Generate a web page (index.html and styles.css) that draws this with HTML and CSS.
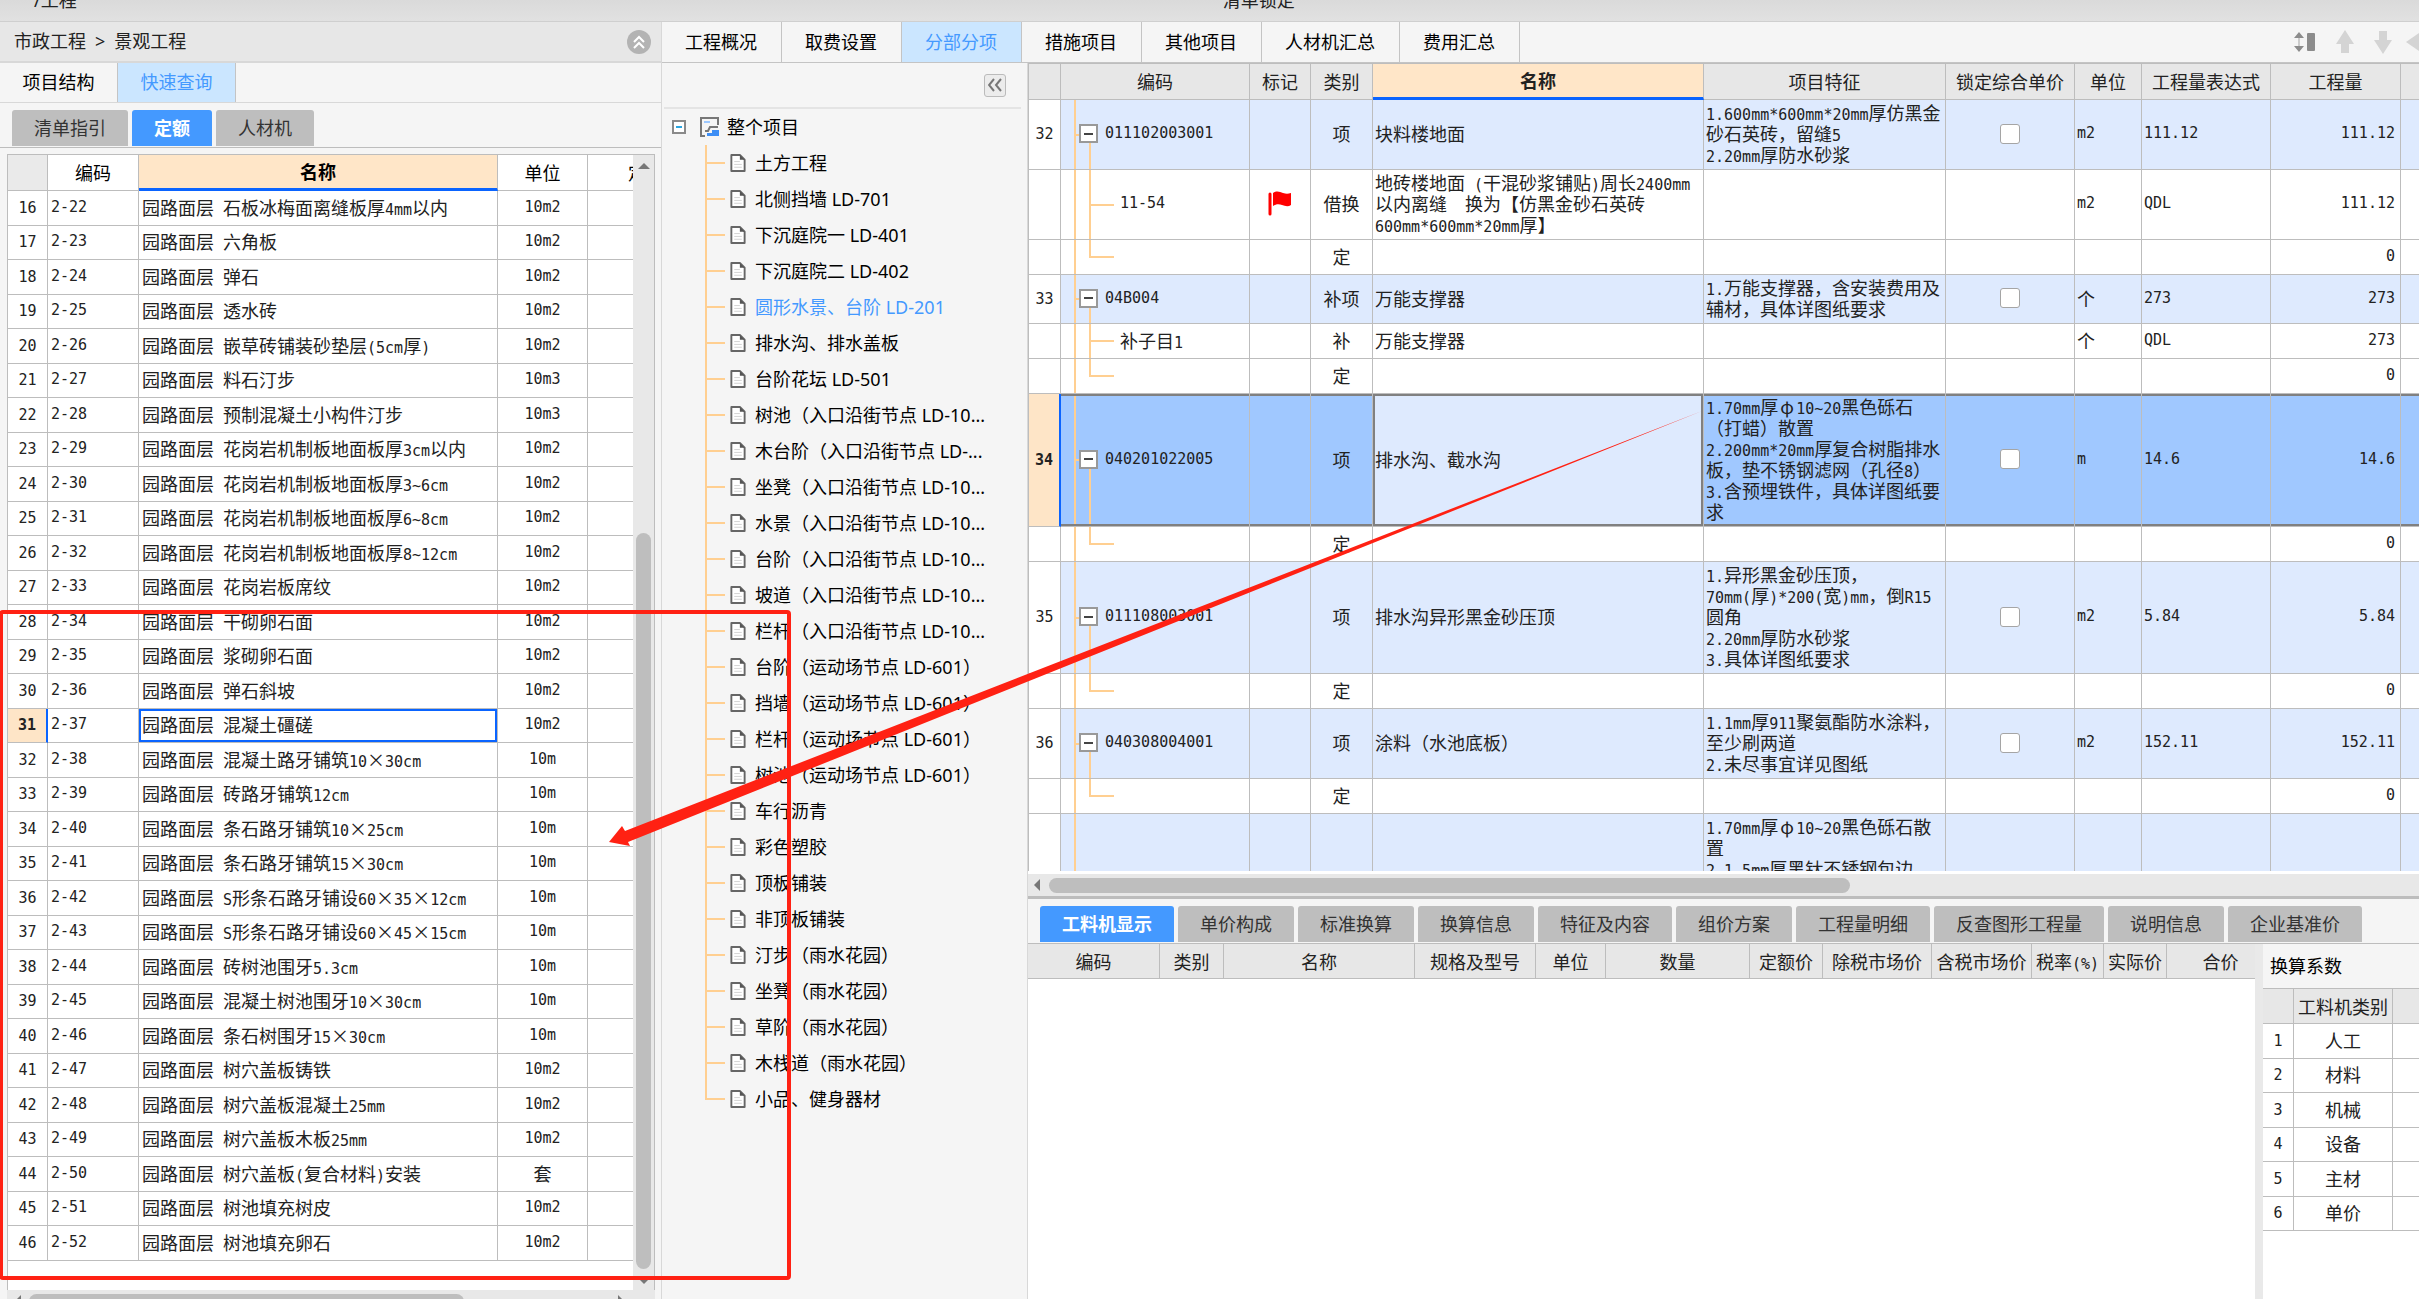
FILE: index.html
```html
<!DOCTYPE html>
<html lang="zh-CN">
<head>
<meta charset="utf-8">
<title>景观工程</title>
<link rel="stylesheet" href="styles.css">
</head>
<body>
<header class="topbar"><span class="top-project">/工程</span><span class="top-lock">清单锁定</span></header>
<div class="app">
  <aside class="left">
    <div class="crumbs">
      <span>市政工程&ensp;&gt;&ensp;景观工程</span>
      <button class="round" aria-label="收起"><svg width="24" height="24" viewBox="0 0 24 24"><circle cx="12" cy="12" r="12" fill="#b3b3b3"/><path d="M7 12l5-5 5 5M7 18l5-5 5 5" fill="none" stroke="#fff" stroke-width="2"/></svg></button>
    </div>
    <nav class="side-tabs"><button>项目结构</button><button class="on">快速查询</button></nav>
    <nav class="pills"><button>清单指引</button><button class="on">定额</button><button>人材机</button></nav>
    <div class="lookup">
      <div class="lookup-main">
        <div class="lookup-view">
          <table class="grid lib">
            <colgroup><col class="w40"><col class="w91"><col class="w359"><col class="w90"><col class="w134"></colgroup>
            <thead><tr><th class="corner"></th><th>编码</th><th class="sorted">名称</th><th>单位</th><th class="cut">定</th></tr></thead>
            <tbody>
            <tr><th>16</th><td class="n">2-22</td><td>园路面层&ensp;石板冰梅面离缝板厚<span class="n">4mm</span>以内</td><td class="n">10m2</td><td></td></tr>
            <tr><th>17</th><td class="n">2-23</td><td>园路面层&ensp;六角板</td><td class="n">10m2</td><td></td></tr>
            <tr><th>18</th><td class="n">2-24</td><td>园路面层&ensp;弹石</td><td class="n">10m2</td><td></td></tr>
            <tr><th>19</th><td class="n">2-25</td><td>园路面层&ensp;透水砖</td><td class="n">10m2</td><td></td></tr>
            <tr><th>20</th><td class="n">2-26</td><td>园路面层&ensp;嵌草砖铺装砂垫层<span class="n">(5cm</span>厚<span class="n">)</span></td><td class="n">10m2</td><td></td></tr>
            <tr><th>21</th><td class="n">2-27</td><td>园路面层&ensp;料石汀步</td><td class="n">10m3</td><td></td></tr>
            <tr><th>22</th><td class="n">2-28</td><td>园路面层&ensp;预制混凝土小构件汀步</td><td class="n">10m3</td><td></td></tr>
            <tr><th>23</th><td class="n">2-29</td><td>园路面层&ensp;花岗岩机制板地面板厚<span class="n">3cm</span>以内</td><td class="n">10m2</td><td></td></tr>
            <tr><th>24</th><td class="n">2-30</td><td>园路面层&ensp;花岗岩机制板地面板厚<span class="n">3~6cm</span></td><td class="n">10m2</td><td></td></tr>
            <tr><th>25</th><td class="n">2-31</td><td>园路面层&ensp;花岗岩机制板地面板厚<span class="n">6~8cm</span></td><td class="n">10m2</td><td></td></tr>
            <tr><th>26</th><td class="n">2-32</td><td>园路面层&ensp;花岗岩机制板地面板厚<span class="n">8~12cm</span></td><td class="n">10m2</td><td></td></tr>
            <tr><th>27</th><td class="n">2-33</td><td>园路面层&ensp;花岗岩板席纹</td><td class="n">10m2</td><td></td></tr>
            <tr><th>28</th><td class="n">2-34</td><td>园路面层&ensp;干砌卵石面</td><td class="n">10m2</td><td></td></tr>
            <tr><th>29</th><td class="n">2-35</td><td>园路面层&ensp;浆砌卵石面</td><td class="n">10m2</td><td></td></tr>
            <tr><th>30</th><td class="n">2-36</td><td>园路面层&ensp;弹石斜坡</td><td class="n">10m2</td><td></td></tr>
            <tr class="current"><th>31</th><td class="n">2-37</td><td>园路面层&ensp;混凝土礓磋</td><td class="n">10m2</td><td></td></tr>
            <tr><th>32</th><td class="n">2-38</td><td>园路面层&ensp;混凝土路牙铺筑<span class="n">10</span><span class="x">×</span><span class="n">30cm</span></td><td class="n">10m</td><td></td></tr>
            <tr><th>33</th><td class="n">2-39</td><td>园路面层&ensp;砖路牙铺筑<span class="n">12cm</span></td><td class="n">10m</td><td></td></tr>
            <tr><th>34</th><td class="n">2-40</td><td>园路面层&ensp;条石路牙铺筑<span class="n">10</span><span class="x">×</span><span class="n">25cm</span></td><td class="n">10m</td><td></td></tr>
            <tr><th>35</th><td class="n">2-41</td><td>园路面层&ensp;条石路牙铺筑<span class="n">15</span><span class="x">×</span><span class="n">30cm</span></td><td class="n">10m</td><td></td></tr>
            <tr><th>36</th><td class="n">2-42</td><td>园路面层&ensp;<span class="n">S</span>形条石路牙铺设<span class="n">60</span><span class="x">×</span><span class="n">35</span><span class="x">×</span><span class="n">12cm</span></td><td class="n">10m</td><td></td></tr>
            <tr><th>37</th><td class="n">2-43</td><td>园路面层&ensp;<span class="n">S</span>形条石路牙铺设<span class="n">60</span><span class="x">×</span><span class="n">45</span><span class="x">×</span><span class="n">15cm</span></td><td class="n">10m</td><td></td></tr>
            <tr><th>38</th><td class="n">2-44</td><td>园路面层&ensp;砖树池围牙<span class="n">5.3cm</span></td><td class="n">10m</td><td></td></tr>
            <tr><th>39</th><td class="n">2-45</td><td>园路面层&ensp;混凝土树池围牙<span class="n">10</span><span class="x">×</span><span class="n">30cm</span></td><td class="n">10m</td><td></td></tr>
            <tr><th>40</th><td class="n">2-46</td><td>园路面层&ensp;条石树围牙<span class="n">15</span><span class="x">×</span><span class="n">30cm</span></td><td class="n">10m</td><td></td></tr>
            <tr><th>41</th><td class="n">2-47</td><td>园路面层&ensp;树穴盖板铸铁</td><td class="n">10m2</td><td></td></tr>
            <tr><th>42</th><td class="n">2-48</td><td>园路面层&ensp;树穴盖板混凝土<span class="n">25mm</span></td><td class="n">10m2</td><td></td></tr>
            <tr><th>43</th><td class="n">2-49</td><td>园路面层&ensp;树穴盖板木板<span class="n">25mm</span></td><td class="n">10m2</td><td></td></tr>
            <tr><th>44</th><td class="n">2-50</td><td>园路面层&ensp;树穴盖板<span class="n">(</span>复合材料<span class="n">)</span>安装</td><td>套</td><td></td></tr>
            <tr><th>45</th><td class="n">2-51</td><td>园路面层&ensp;树池填充树皮</td><td class="n">10m2</td><td></td></tr>
            <tr><th>46</th><td class="n">2-52</td><td>园路面层&ensp;树池填充卵石</td><td class="n">10m2</td><td></td></tr>
            </tbody>
          </table>
        </div>
        <div class="vscroll"><i class="arrow up"></i><i></i><i class="thumb"></i><i class="arrow down"></i></div>
      </div>
      <div class="hscroll lib-scroll"><i class="arrow prev"></i><i class="thumb"></i><i></i><i class="arrow next"></i><i></i></div>
    </div>
  </aside>

  <main class="work">
    <div class="modules">
      <nav class="module-tabs"><button>工程概况</button><button>取费设置</button><button class="on">分部分项</button><button>措施项目</button><button>其他项目</button><button>人材机汇总</button><button>费用汇总</button></nav>
      <div class="tools">
        <button aria-label="行高"><svg width="22" height="20" viewBox="0 0 22 20"><path d="M5 0l5 6H0zM5 20l5-6H0z" fill="#8c8c8c"/><path d="M5 6v8" stroke="#ccc" stroke-width="2"/><rect x="13" y="1" width="8" height="18" rx="1" fill="#8c8c8c"/></svg></button>
        <button aria-label="上移"><svg width="18" height="24" viewBox="0 0 18 24"><path d="M9 0l9 14h-5v9H5v-9H0z" fill="#d4d4d4"/></svg></button>
        <button aria-label="下移"><svg width="18" height="24" viewBox="0 0 18 24"><path d="M9 24l9-14h-5V1H5v9H0z" fill="#d4d4d4"/></svg></button>
        <button aria-label="左移"><svg width="13" height="20" viewBox="0 0 13 20"><path d="M0 10L13 1v18z" fill="#d4d4d4"/></svg></button>
      </div>
    </div>
    <div class="workbody">
      <section class="outline">
        <div class="outline-head"><button aria-label="折叠"><svg width="14" height="14" viewBox="0 0 14 14"><path d="M6 1L1 7l5 6M13 1L8 7l5 6" fill="none" stroke="#777" stroke-width="2"/></svg></button></div>
        <div class="root">
          <svg width="14" height="14" viewBox="0 0 14 14"><rect x="1" y="1" width="12" height="12" fill="#fff" stroke="#8a8a8a" stroke-width="2"/><path d="M4 7h6" stroke="#2aa5e0" stroke-width="2"/></svg>
          <svg width="20" height="20" viewBox="0 0 20 20"><path d="M18 8V1H1v18h4" fill="none" stroke="#777" stroke-width="2"/><path d="M4 5h6" stroke="#9cc8ff" stroke-width="2"/><path d="M5 14h3l2-4h8" fill="none" stroke="#777" stroke-width="2"/><path d="M7 19v-3h5v-3h7v6z" fill="#3d8ef5"/></svg>
          <span>整个项目</span>
        </div>
        <svg class="defs" width="0" height="0"><symbol id="doc" viewBox="0 0 16 19"><path d="M1 1h9l5 5v12H1z" fill="#fff" stroke="#666" stroke-width="2" stroke-linejoin="round"/><path d="M10 1l5 5h-5z" fill="#555"/><path d="M4 8h6M4 11h8M4 14h8" stroke="#d0d0d0"/></symbol></svg>
        <ul class="tree">
          <li><svg><use href="#doc"/></svg><a href="#">土方工程</a></li>
          <li><svg><use href="#doc"/></svg><a href="#">北侧挡墙 LD-701</a></li>
          <li><svg><use href="#doc"/></svg><a href="#">下沉庭院一 LD-401</a></li>
          <li><svg><use href="#doc"/></svg><a href="#">下沉庭院二 LD-402</a></li>
          <li class="on"><svg><use href="#doc"/></svg><a href="#">圆形水景、台阶 LD-201</a></li>
          <li><svg><use href="#doc"/></svg><a href="#">排水沟、排水盖板</a></li>
          <li><svg><use href="#doc"/></svg><a href="#">台阶花坛 LD-501</a></li>
          <li><svg><use href="#doc"/></svg><a href="#">树池（入口沿街节点 LD-10...</a></li>
          <li><svg><use href="#doc"/></svg><a href="#">木台阶（入口沿街节点 LD-...</a></li>
          <li><svg><use href="#doc"/></svg><a href="#">坐凳（入口沿街节点 LD-10...</a></li>
          <li><svg><use href="#doc"/></svg><a href="#">水景（入口沿街节点 LD-10...</a></li>
          <li><svg><use href="#doc"/></svg><a href="#">台阶（入口沿街节点 LD-10...</a></li>
          <li><svg><use href="#doc"/></svg><a href="#">坡道（入口沿街节点 LD-10...</a></li>
          <li><svg><use href="#doc"/></svg><a href="#">栏杆（入口沿街节点 LD-10...</a></li>
          <li><svg><use href="#doc"/></svg><a href="#">台阶（运动场节点 LD-601）</a></li>
          <li><svg><use href="#doc"/></svg><a href="#">挡墙（运动场节点 LD-601）</a></li>
          <li><svg><use href="#doc"/></svg><a href="#">栏杆（运动场节点 LD-601）</a></li>
          <li><svg><use href="#doc"/></svg><a href="#">树池（运动场节点 LD-601）</a></li>
          <li><svg><use href="#doc"/></svg><a href="#">车行沥青</a></li>
          <li><svg><use href="#doc"/></svg><a href="#">彩色塑胶</a></li>
          <li><svg><use href="#doc"/></svg><a href="#">顶板铺装</a></li>
          <li><svg><use href="#doc"/></svg><a href="#">非顶板铺装</a></li>
          <li><svg><use href="#doc"/></svg><a href="#">汀步（雨水花园）</a></li>
          <li><svg><use href="#doc"/></svg><a href="#">坐凳（雨水花园）</a></li>
          <li><svg><use href="#doc"/></svg><a href="#">草阶（雨水花园）</a></li>
          <li><svg><use href="#doc"/></svg><a href="#">木栈道（雨水花园）</a></li>
          <li><svg><use href="#doc"/></svg><a href="#">小品、健身器材</a></li>
        </ul>
      </section>

      <div class="content">
        <section class="bill">
          <div class="bill-view">
            <table class="grid items">
              <colgroup><col class="w32"><col class="w189"><col class="w61"><col class="w62"><col class="w331"><col class="w242"><col class="w129"><col class="w67"><col class="w129"><col class="w130"><col class="w90"></colgroup>
              <thead><tr><th></th><th>编码</th><th>标记</th><th>类别</th><th class="sorted">名称</th><th>项目特征</th><th>锁定综合单价</th><th>单位</th><th>工程量表达式</th><th>工程量</th><th></th></tr></thead>
              <tbody>
              <tr class="item"><th>32</th><td class="code"><span><i class="box"></i>011102003001</span></td><td></td><td>项</td><td>块料楼地面</td><td><span class="n">1.600mm*600mm*20mm</span>厚仿黑金<br>砂石英砖，留缝<span class="n">5</span><br><span class="n">2.20mm</span>厚防水砂浆</td><td><input type="checkbox" aria-label="锁定 32"></td><td class="n">m2</td><td class="n">111.12</td><td class="n">111.12</td><td></td></tr>
              <tr><th></th><td class="code kid n">11-54</td><td><svg class="flag" width="24" height="25" viewBox="0 0 24 25"><path d="M2 3v20" stroke="#f00" stroke-width="3" stroke-linecap="round"/><path d="M5 2c4-3 7-1 10 0s5 1 8 0v12c-3 2-6 1-9 0s-6-1-9 1z" fill="#f00"/></svg></td><td>借换</td><td>地砖楼地面<span class="n"> (</span>干混砂浆铺贴<span class="n">)</span>周长<span class="n">2400mm</span><br>以内离缝　换为【仿黑金砂石英砖<br><span class="n">600mm*600mm*20mm</span>厚】</td><td></td><td></td><td class="n">m2</td><td class="n">QDL</td><td class="n">111.12</td><td></td></tr>
              <tr><th></th><td class="code kid last"></td><td></td><td>定</td><td></td><td></td><td></td><td></td><td></td><td class="n">0</td><td></td></tr>
              <tr class="item"><th>33</th><td class="code"><span><i class="box"></i>04B004</span></td><td></td><td>补项</td><td>万能支撑器</td><td><span class="n">1.</span>万能支撑器，含安装费用及<br>辅材，具体详图纸要求</td><td><input type="checkbox" aria-label="锁定 33"></td><td>个</td><td class="n">273</td><td class="n">273</td><td></td></tr>
              <tr><th></th><td class="code kid">补子目<span class="n">1</span></td><td></td><td>补</td><td>万能支撑器</td><td></td><td></td><td>个</td><td class="n">QDL</td><td class="n">273</td><td></td></tr>
              <tr><th></th><td class="code kid last"></td><td></td><td>定</td><td></td><td></td><td></td><td></td><td></td><td class="n">0</td><td></td></tr>
              <tr class="item current"><th>34</th><td class="code"><span><i class="box"></i>040201022005</span></td><td></td><td>项</td><td class="focus">排水沟、截水沟</td><td><span class="n">1.70mm</span>厚<span class="x">φ</span><span class="n">10~20</span>黑色砾石<br>（打蜡）散置<br><span class="n">2.200mm*20mm</span>厚复合树脂排水<br>板，垫不锈钢滤网（孔径<span class="n">8</span>）<br><span class="n">3.</span>含预埋铁件，具体详图纸要<br>求</td><td><input type="checkbox" aria-label="锁定 34"></td><td class="n">m</td><td class="n">14.6</td><td class="n">14.6</td><td></td></tr>
              <tr><th></th><td class="code kid last"></td><td></td><td>定</td><td></td><td></td><td></td><td></td><td></td><td class="n">0</td><td></td></tr>
              <tr class="item"><th>35</th><td class="code"><span><i class="box"></i>011108003001</span></td><td></td><td>项</td><td>排水沟异形黑金砂压顶</td><td><span class="n">1.</span>异形黑金砂压顶，<br><span class="n">70mm(</span>厚<span class="n">)*200(</span>宽<span class="n">)mm</span>，倒<span class="n">R15</span><br>圆角<br><span class="n">2.20mm</span>厚防水砂浆<br><span class="n">3.</span>具体详图纸要求</td><td><input type="checkbox" aria-label="锁定 35"></td><td class="n">m2</td><td class="n">5.84</td><td class="n">5.84</td><td></td></tr>
              <tr><th></th><td class="code kid last"></td><td></td><td>定</td><td></td><td></td><td></td><td></td><td></td><td class="n">0</td><td></td></tr>
              <tr class="item"><th>36</th><td class="code"><span><i class="box"></i>040308004001</span></td><td></td><td>项</td><td>涂料（水池底板）</td><td><span class="n">1.1mm</span>厚<span class="n">911</span>聚氨酯防水涂料，<br>至少刷两道<br><span class="n">2.</span>未尽事宜详见图纸</td><td><input type="checkbox" aria-label="锁定 36"></td><td class="n">m2</td><td class="n">152.11</td><td class="n">152.11</td><td></td></tr>
              <tr><th></th><td class="code kid last"></td><td></td><td>定</td><td></td><td></td><td></td><td></td><td></td><td class="n">0</td><td></td></tr>
              <tr class="item next"><th></th><td class="code trunk"></td><td></td><td></td><td></td><td><span class="n">1.70mm</span>厚<span class="x">φ</span><span class="n">10~20</span>黑色砾石散<br>置<br><span class="n">2.1.5mm</span>厚黑钛不锈钢包边</td><td></td><td></td><td></td><td></td><td></td></tr>
              </tbody>
            </table>
          </div>
          <div class="hscroll bill-scroll"><i class="arrow prev"></i><i class="thumb"></i><i></i></div>
        </section>
        <section class="detail">
          <nav class="pills"><button class="on">工料机显示</button><button>单价构成</button><button>标准换算</button><button>换算信息</button><button>特征及内容</button><button>组价方案</button><button>工程量明细</button><button>反查图形工程量</button><button>说明信息</button><button>企业基准价</button></nav>
          <div class="detail-body">
            <div class="detail-view">
              <table class="grid parts">
                <colgroup><col class="w132"><col class="w64"><col class="w191"><col class="w121"><col class="w70"><col class="w144"><col class="w73"><col class="w109"><col class="w100"><col class="w72"><col class="w63"><col class="w108"></colgroup>
                <thead><tr><th>编码</th><th>类别</th><th>名称</th><th>规格及型号</th><th>单位</th><th>数量</th><th>定额价</th><th>除税市场价</th><th>含税市场价</th><th>税率<span class="n">(%)</span></th><th>实际价</th><th>合价</th></tr></thead>
              </table>
            </div>
            <div class="factors">
              <h2>换算系数</h2>
              <table class="grid factor">
                <colgroup><col class="w31"><col class="w99"><col class="w90"></colgroup>
                <thead><tr><th></th><th>工料机类别</th><th></th></tr></thead>
                <tbody>
                <tr><th>1</th><td>人工</td><td></td></tr>
                <tr><th>2</th><td>材料</td><td></td></tr>
                <tr><th>3</th><td>机械</td><td></td></tr>
                <tr><th>4</th><td>设备</td><td></td></tr>
                <tr><th>5</th><td>主材</td><td></td></tr>
                <tr><th>6</th><td>单价</td><td></td></tr>
                </tbody>
              </table>
            </div>
          </div>
        </section>
      </div>
    </div>
  </main>
</div>
<svg class="markup" width="2419" height="1299" viewBox="0 0 2419 1299" aria-hidden="true">
  <rect x="1" y="612" width="788" height="666" rx="2" fill="none" stroke="#ff2113" stroke-width="4"/>
  <path d="M1702 411L625 831L622 826L609 842L630 846L628 842Z" fill="#ff2113"/>
</svg>
</body>
</html>
```

FILE: styles.css
```css
* { box-sizing: border-box; }
body {
  margin: 0;
  height: 100vh;
  display: flex;
  flex-direction: column;
  overflow: hidden;
  position: relative;
  background: #f5f5f5;
  color: #222;
  font: 18px/21px "Noto Sans", "Noto Sans CJK SC", sans-serif;
}
button { font: inherit; color: inherit; border: 0; background: none; padding: 0; }
svg { display: block; flex: none; }
i { font-style: normal; }

.topbar {
  flex: none;
  height: 22px;
  display: flex;
  align-items: flex-end;
  padding: 0 0 10px 34px;
  gap: 1146px;
  overflow: hidden;
  background: linear-gradient(#dadada, #e1e1e1);
  border-bottom: 1px solid #cfcfcf;
}
.app { flex: 1; min-height: 0; display: flex; }

/* left panel */
.left {
  flex: none;
  width: 662px;
  display: flex;
  flex-direction: column;
  border-right: 1px solid #d8d8d8;
}
.crumbs {
  height: 41px;
  display: flex;
  align-items: center;
  justify-content: space-between;
  padding: 0 10px 0 14px;
  background: #e7e7e7;
  border-bottom: 2px solid #d8d8d8;
}
.side-tabs {
  height: 40px;
  display: flex;
  border-bottom: 1px solid #d8d8d8;
}
.side-tabs button { width: 118px; border-right: 1px solid #c4c4c4; color: #000; }
.side-tabs .on { background: #cbe6ff; color: #4499ff; }
.pills {
  flex: none;
  display: flex;
  align-items: flex-end;
  gap: 4px;
  border-bottom: 1px solid #bdbdbd;
}
.pills button {
  height: 36px;
  padding: 0 22px;
  background: #bebebe;
  border-radius: 3px 3px 0 0;
  color: #333;
  white-space: nowrap;
}
.pills .on { background: #4499ff; color: #fff; font-weight: bold; }
.left .pills { height: 45px; padding: 0 0 1px 12px; }

.lookup {
  flex: 1;
  min-height: 0;
  margin: 6px 6px 0 7px;
  display: flex;
  flex-direction: column;
}
.lookup-main {
  flex: 1;
  min-height: 0;
  display: flex;
  background: #fff;
  border: 1px solid #bdbdbd;
  border-bottom: 0;
}
.lookup-view { flex: 1; overflow: hidden; }
.vscroll {
  width: 21px;
  display: grid;
  grid-template-rows: 14px 364fr 736fr 21px;
  justify-items: center;
  background: #e8e8e8;
}
.thumb { display: block; background: #bebebe; border-radius: 8px; }
.vscroll .thumb { width: 15px; }
.arrow { display: block; width: 0; height: 0; border: 6px solid transparent; }
.up { border-bottom-color: #777; border-top-width: 0; margin-top: 8px; }
.down { border-top-color: #777; border-bottom-width: 0; margin-top: 9px; }
.prev { border-right-color: #777; border-left-width: 0; }
.next { border-left-color: #777; border-right-width: 0; }
.hscroll { flex: none; display: grid; align-items: center; background: #e8e8e8; }
.hscroll .thumb { height: 15px; }
.lib-scroll {
  height: 22px;
  margin-bottom: -13px;
  padding-left: 8px;
  grid-template-columns: 14px 436fr 154fr 6px 31px;
}

/* tables */
.grid {
  border-collapse: separate;
  border-spacing: 0;
  table-layout: fixed;
  width: 0;
  font-family: "Noto Sans CJK SC", sans-serif;
}
.grid th, .grid td {
  padding: 0 3px;
  border-right: 1px solid #bdbdbd;
  border-bottom: 1px solid #bdbdbd;
  white-space: nowrap;
  text-align: left;
}
.grid th { font-weight: normal; text-align: center; padding: 0; }
.grid tbody th, .grid .n { font-family: "DejaVu Sans Mono", monospace; font-size: 15px; }
.grid span.n { line-height: 15px; white-space: pre; }
.x { display: inline-block; width: 18px; line-height: 18px; text-align: center; }
.grid .sorted {
  background: #ffe6c8;
  font-weight: bold;
  border-bottom: 3px solid #0a64ff;
}
.grid .current > th { background: #fee5c7; font-weight: bold; border-right: 2px solid #0a64ff; }

.w31 { width: 31px; } .w32 { width: 32px; } .w40 { width: 40px; } .w61 { width: 61px; }
.w62 { width: 62px; } .w63 { width: 63px; } .w64 { width: 64px; } .w67 { width: 67px; }
.w70 { width: 70px; } .w72 { width: 72px; } .w73 { width: 73px; } .w90 { width: 90px; }
.w91 { width: 91px; } .w99 { width: 99px; } .w100 { width: 100px; } .w108 { width: 108px; }
.w109 { width: 109px; } .w121 { width: 121px; } .w129 { width: 129px; } .w130 { width: 130px; }
.w132 { width: 132px; } .w134 { width: 134px; } .w144 { width: 144px; } .w189 { width: 189px; }
.w191 { width: 191px; } .w242 { width: 242px; } .w331 { width: 331px; } .w359 { width: 359px; }

.lib thead th { height: 36px; color: #000; }
.lib .corner { background: #eaeaea; }
.lib thead .cut { text-align: left; padding-left: 40px; }
.lib tbody tr { height: 34px; }
.lib tbody tr:nth-child(odd) { height: 35px; }
.lib tbody td { padding-bottom: 2px; }
.lib td:nth-child(4) { text-align: center; }
.lib .current td:nth-child(3) { box-shadow: inset 0 0 0 2px #0a64ff; }

/* work area */
.work { flex: 1; min-width: 0; display: flex; flex-direction: column; }
.modules {
  height: 41px;
  display: flex;
  justify-content: space-between;
  border-bottom: 1px solid #c4c4c4;
}
.module-tabs { display: flex; color: #000; }
.module-tabs button { padding: 0 24px 0 23px; border-right: 1px solid #c4c4c4; white-space: nowrap; }
.module-tabs .on { background: #cbe6ff; color: #4499ff; }
.tools { display: flex; align-items: center; gap: 20px; }
.tools button:last-child { margin-left: -6px; }
.workbody { flex: 1; min-height: 0; display: flex; }

.outline { flex: none; width: 366px; border-right: 1px solid #d8d8d8; color: #000; }
.outline-head {
  height: 46px;
  display: flex;
  align-items: center;
  justify-content: flex-end;
  margin: 0 6px 0 2px;
  padding-right: 15px;
  border-bottom: 2px solid #e4e4e4;
}
.outline-head button {
  width: 22px;
  height: 23px;
  display: grid;
  place-items: center;
  background: #ececec;
  border: 1px solid #bbb;
  border-radius: 3px;
}
.root { height: 36px; display: flex; align-items: center; padding-left: 10px; }
.root svg + svg { margin-left: 14px; }
.root span { margin-left: 7px; }
.defs { position: absolute; }
.tree { list-style: none; margin: 0; padding: 0; }
.tree li {
  --line: linear-gradient(#ffcf91, #ffcf91);
  height: 36px;
  display: flex;
  align-items: center;
  gap: 9px;
  padding-left: 68px;
  background: var(--line) 43px 0 / 2px 100% no-repeat, var(--line) 43px 50% / 20px 2px no-repeat;
}
.tree li:last-child {
  background: var(--line) 43px 0 / 2px 50% no-repeat, var(--line) 43px 50% / 20px 2px no-repeat;
}
.tree svg { width: 16px; height: 18px; }
.tree a { color: inherit; text-decoration: none; white-space: nowrap; }
.tree .on a { color: #4499ff; }

.content { flex: 1; min-width: 0; display: flex; flex-direction: column; }
.bill { flex: 25 1 0; min-height: 0; display: flex; flex-direction: column; border-bottom: 3px solid #bdbdbd; }
.bill-view { flex: 1; min-height: 0; overflow: hidden; background: #fff; border-bottom: 3px solid #fff; border-top: 1px solid #bdbdbd; }
.bill-scroll { height: 22px; padding-left: 6px; grid-template-columns: 15px 801fr 569fr; }

.items { border-left: 1px solid #bdbdbd; }
.items thead th { height: 36px; background: #e7e7e7; }
.items thead .sorted { background: #ffe6c8; }
.items tbody tr { height: 35px; }
.items tbody td { padding: 2px 2px 4px; }
.items tbody td:nth-child(3), .items tbody td:nth-child(4), .items tbody td:nth-child(7) { text-align: center; }
.items tbody td:nth-child(10) { text-align: right; padding-right: 5px; }
.items .item td { background-color: #deeafe; }
.items .current td { background-color: #a0c8ff; box-shadow: inset 0 2px #808080, inset 0 -2px #808080; }
.items .current td.focus { background-color: #deeafe; box-shadow: inset 0 0 0 2px #808080; }
.items .next { height: 147px; }
.items .next td { vertical-align: top; }
.items .flag { margin: 0 auto; }
.items tbody .code {
  --line: linear-gradient(#ffcf91, #ffcf91);
  background-repeat: no-repeat;
  background-image: var(--line), var(--line), var(--line);
  background-position: 13px 0, 13px 50%, 28px 100%;
  background-size: 2px 100%, 8px 2px, 2px 50%;
  padding-left: 18px;
}
.items tbody .kid {
  padding-left: 59px;
  background-position: 13px 0, 28px 50%, 28px 0;
  background-size: 2px 100%, 25px 2px, 2px 100%;
}
.items tbody .last { background-size: 2px 100%, 25px 2px, 2px 50%; }
.items tbody .trunk { background-size: 2px 100%, 0 0, 0 0; }
.items .code > span:not(.n) {
  display: flex;
  align-items: center;
  gap: 7px;
  font-family: "DejaVu Sans Mono", monospace;
  font-size: 15px;
}
.box {
  width: 19px;
  height: 19px;
  border: 2px solid #999;
  background: linear-gradient(#444, #444) center / 9px 2px no-repeat #fff;
}
.items input {
  appearance: none;
  display: block;
  width: 20px;
  height: 20px;
  margin: 0 auto;
  background: #fff;
  border: 1px solid #a5a5a5;
  border-radius: 3px;
}

/* detail pane */
.detail { flex: 12 1 0; min-height: 0; display: flex; flex-direction: column; }
.detail .pills { height: 45px; padding: 0 0 1px 12px; }
.detail-body { flex: 1; min-height: 0; display: flex; }
.detail-view { flex: 1; min-width: 0; overflow: hidden; background: #fff; }
.parts thead th, .factor thead th { height: 35px; background: #e7e7e7; }
.factors {
  flex: none;
  width: 164px;
  display: flex;
  flex-direction: column;
  overflow: hidden;
  background: #fff;
  border-left: 8px solid #e9e9e9;
}
.factors h2 {
  margin: 0;
  height: 45px;
  flex: none;
  padding: 12px 0 0 7px;
  background: #f5f5f5;
  border-bottom: 1px solid #bdbdbd;
  font-size: 18px;
  line-height: 21px;
  font-weight: normal;
  color: #000;
}
.factor tbody tr { height: 34px; }
.factor tbody tr:nth-child(odd) { height: 35px; }
.factor tbody td { text-align: center; padding-bottom: 2px; }

/* annotation drawn over the window */
.markup { position: absolute; left: 0; top: 0; pointer-events: none; }
```
